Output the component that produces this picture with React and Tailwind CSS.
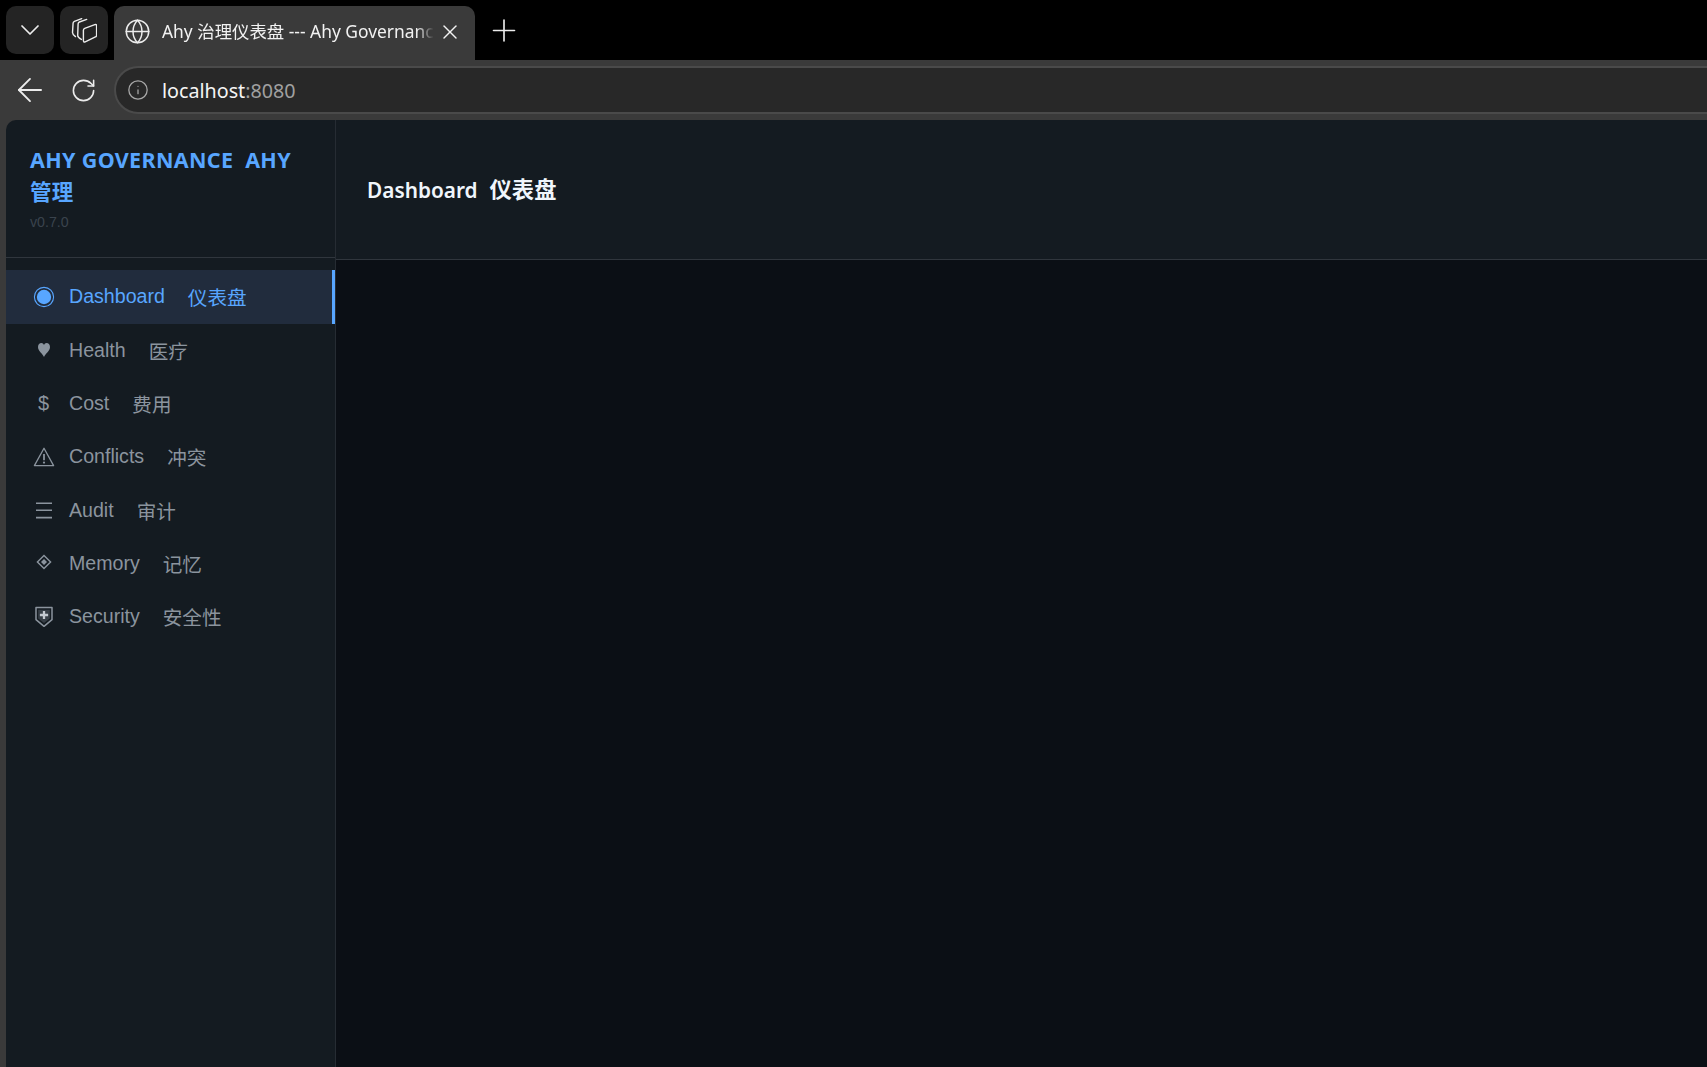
import React from 'react';
import { ChevronDown, Globe, X, Plus, ArrowLeft, RotateCw, Info } from 'lucide-react';

function IconCircle() {
  return (
    <svg width="22" height="22" viewBox="0 0 22 22" fill="none">
      <circle cx="11" cy="11" r="9.6" stroke="currentColor" strokeWidth="1.1" />
      <circle cx="11" cy="11" r="7.2" fill="currentColor" />
    </svg>
  );
}
function IconHeart() {
  return (
    <svg width="22" height="22" viewBox="0 0 22 22">
      <path fill="currentColor" d="M11 18 C9.5 14.5 5 12 5 8 C5 5.6 6.6 4 8.4 4 C9.6 4 10.6 4.8 11 6 C11.4 4.8 12.4 4 13.6 4 C15.4 4 17 5.6 17 8 C17 12 12.5 14.5 11 18 Z" />
    </svg>
  );
}
function IconWarn() {
  return (
    <svg width="22" height="22" viewBox="0 0 22 22" fill="none" stroke="currentColor">
      <path strokeWidth="1.3" strokeLinejoin="round" d="M11 2.2 L20.6 19.6 H1.4 Z" />
      <path strokeWidth="1.8" d="M11 8 V14.2" />
      <circle cx="11" cy="16.6" r="1.1" fill="currentColor" stroke="none" />
    </svg>
  );
}
function IconMenu() {
  return (
    <svg width="22" height="22" viewBox="0 0 22 22" fill="none" stroke="currentColor" strokeWidth="1.6">
      <path d="M3 4.2 H19 M3 11.2 H19 M3 18.6 H19" />
    </svg>
  );
}
function IconDiamond() {
  return (
    <svg width="22" height="22" viewBox="0 0 22 22" fill="none" className="-translate-y-[2px]">
      <path d="M11 4.4 L17.6 11 L11 17.6 L4.4 11 Z" stroke="currentColor" strokeWidth="1.4" />
      <path d="M11 8 L14 11 L11 14 L8 11 Z" fill="currentColor" />
    </svg>
  );
}
function IconShield() {
  return (
    <svg width="22" height="22" viewBox="0 0 22 22" fill="none" className="-translate-y-[0.5px]">
      <path d="M3 2 H19 V14.2 L11 20.8 L3 14.2 Z" stroke="currentColor" strokeWidth="1.5" strokeLinejoin="round" />
      <path d="M5.2 4.2 H16.8 V13 L11 17.4 L5.2 13 Z" fill="currentColor" fillOpacity="0.3" />
      <path d="M11 5.4 V13.6 M6.9 9.5 H15.1" stroke="#c4cad1" strokeWidth="2.3" />
    </svg>
  );
}
function IconDollar() {
  return <span className="text-[20px] leading-none font-['Liberation_Sans'] -translate-y-[1px]">$</span>;
}

const nav = [
  [IconCircle, 'Dashboard', '仪表盘', true],
  [IconHeart, 'Health', '医疗'],
  [IconDollar, 'Cost', '费用'],
  [IconWarn, 'Conflicts', '冲突'],
  [IconMenu, 'Audit', '审计'],
  [IconDiamond, 'Memory', '记忆'],
  [IconShield, 'Security', '安全性'],
];

function TabsIcon() {
  return (
    <svg width="26" height="26" viewBox="0 0 26 26" fill="none" stroke="#ececec" strokeWidth="1.4" strokeLinejoin="round" strokeLinecap="round">
      <path d="M10.7 1.6 L3.4 4.3 Q2.2 4.8 2.1 6 L1.5 15.6 Q1.5 17.6 4.5 19.6" />
      <path d="M15.7 2.4 L8.4 5 Q7.2 5.5 7.1 6.7 L6.7 18.6 Q6.7 20.6 10.4 22.4" />
      <path d="M13.7 11.4 L23.8 7.6 Q25.6 7 25.6 8.8 L25.6 18.2 Q25.6 19.4 24.4 19.9 L14.2 24.8 Q12.4 25.5 12.4 23.6 L12.4 13.2 Q12.4 11.9 13.7 11.4 Z" />
    </svg>
  );
}

export default function App() {
  return (
    <div className="h-screen w-full overflow-hidden flex flex-col bg-[#3a3a3a] font-['Noto_Sans','Noto_Sans_CJK_SC',sans-serif]">
      {/* Tab strip */}
      <div className="h-[60px] shrink-0 bg-black flex items-end pl-[6px]">
        <div className="mb-[6px] w-[48px] h-[48px] rounded-[10px] bg-[#242424] flex items-center justify-center">
          <ChevronDown size={32} color="#ececec" strokeWidth={1.3} />
        </div>
        <div className="mb-[6px] ml-[6px] w-[48px] h-[48px] rounded-[10px] bg-[#242424] flex items-center justify-center">
          <TabsIcon />
        </div>
        <div className="ml-[6px] w-[361px] h-[54px] rounded-t-[10px] bg-[#3a3a3a] flex items-center pl-[10px] pr-[13px] pb-[3px]">
          <Globe size={27} color="#ececec" strokeWidth={1.3} className="shrink-0" />
          <span className="ml-[11px] flex-1 overflow-hidden whitespace-nowrap text-[17.4px] text-[#f2f2f2] [mask-image:linear-gradient(to_left,transparent,black_18px)]">Ahy 治理仪表盘 --- Ahy Governance</span>
          <X size={24} color="#f2f2f2" strokeWidth={1.4} className="shrink-0 ml-[4px]" />
        </div>
        <div className="mb-[6px] ml-[11px] w-[36px] h-[48px] flex items-center justify-center">
          <Plus size={37} color="#ececec" strokeWidth={1.1} />
        </div>
      </div>

      {/* Toolbar */}
      <div className="h-[60px] shrink-0 flex items-start">
        <div className="w-[114px] shrink-0 h-[60px] flex items-center pl-[11px] gap-[21px]">
          <ArrowLeft size={38} color="#ececec" strokeWidth={1.15} />
          <RotateCw size={27} color="#ececec" strokeWidth={1.4} />
        </div>
        <div className="mt-[6px] h-[48px] flex-1 bg-[#282828] border-2 border-r-0 border-[#4a4a4a] rounded-l-[24px] flex items-center pl-[11px]">
          <Info size={22} color="#a8a8a8" strokeWidth={1.4} />
          <span className="ml-[13px] text-[19.7px] translate-y-[1px] text-[#f5f5f5]">localhost<span className="text-[#a0a0a0]">:8080</span></span>
        </div>
      </div>

      {/* Page */}
      <div className="flex-1 min-h-0 flex pl-[6px]">
        <aside className="w-[330px] shrink-0 bg-[#141b21] border-r border-[#262c33] rounded-tl-[10px] flex flex-col">
          <div className="h-[138px] shrink-0 border-b border-[#30363d] pl-[24px] pr-[24px] pt-[24px]">
            <div className="text-[21.5px] leading-[32px] font-bold tracking-[0.34px] text-[#58a6ff]">AHY GOVERNANCE&nbsp; AHY 管理</div>
            <div className="mt-[4px] text-[14.2px] leading-[20px] text-[#3a434d] font-['Liberation_Sans']">v0.7.0</div>
          </div>
          <nav className="pt-[12px] flex flex-col">
            {nav.map(([Icon, en, zh, active]) => (
              <div
                key={en}
                className={active
                  ? 'h-[54px] -mb-[0.3px] flex items-center pl-[24px] bg-[#212c3d] border-r-[3px] border-[#58a6ff] text-[#58a6ff]'
                  : 'h-[53.35px] flex items-center pl-[24px] text-[#8b949e]'}
              >
                <span className="w-[27px] shrink-0 flex items-center justify-center"><Icon /></span>
                <span className="ml-[12px] text-[19.6px] font-['Liberation_Sans']">{en}</span>
                <span className="ml-[23px] text-[19.6px] font-['Noto_Sans_CJK_SC']">{zh}</span>
              </div>
            ))}
          </nav>
        </aside>
        <main className="flex-1 min-w-0 bg-[#0b0f15] flex flex-col">
          <header className="h-[140px] shrink-0 bg-[#141b21] border-b border-[#30363d] flex items-center pl-[31px]">
            <h1 className="text-[22.3px] font-semibold text-[#f0f6fc]"><span className="text-[20.8px]">Dashboard</span><span className="ml-[12px]">仪表盘</span></h1>
          </header>
        </main>
      </div>
    </div>
  );
}
